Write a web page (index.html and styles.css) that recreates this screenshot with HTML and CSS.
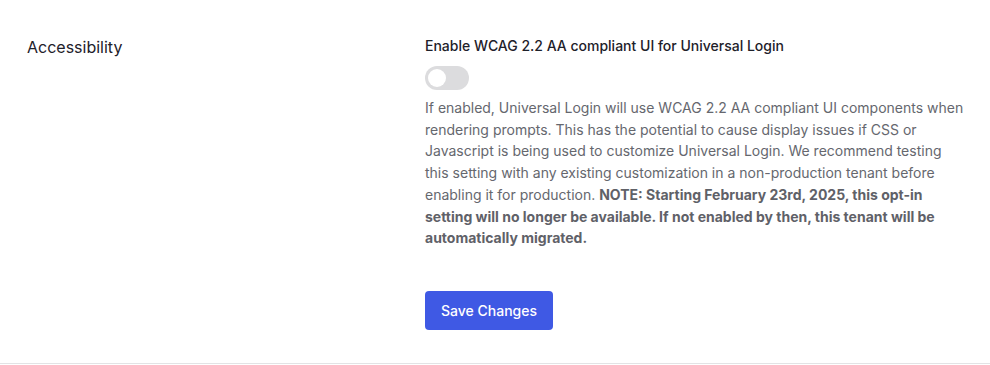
FILE: index.html
```html
<!DOCTYPE html>
<html>
<head>
<meta charset="utf-8">
<link rel="stylesheet" href="styles.css">
</head>
<body>
<section class="row">
  <div class="title">Accessibility</div>
  <div class="content">
    <div class="label">Enable WCAG 2.2 AA compliant UI for Universal Login</div>
    <div class="toggle"><span class="knob"></span></div>
    <p class="desc">If enabled, Universal Login will use WCAG 2.2 AA compliant UI components when rendering prompts. This has the potential to cause display issues if CSS or Javascript is being used to customize Universal Login. We recommend testing this setting with any existing customization in a non-production tenant before enabling it for production. <strong>NOTE: Starting February 23rd, 2025, this opt-in setting will no longer be available. If not enabled by then, this tenant will be automatically migrated.</strong></p>
    <button class="save">Save Changes</button>
  </div>
</section>
</body>
</html>
```
FILE: styles.css
```css
* { box-sizing: border-box; }
html, body { margin: 0; padding: 0; background: #fff; }
body { font-family: Inter, "Noto Sans", sans-serif; color: #1e212a; }
.row {
  display: flex;
  padding: 36px 0 32px 27px;
  border-bottom: 1px solid #e3e3e5;
  height: 364px;
}
.title {
  width: 398px;
  font-size: 16px;
  line-height: 22px;
  font-weight: 400;
  color: #1e212a;
}
.content { width: 540px; }
.label {
  font-size: 14px;
  line-height: 20px;
  font-weight: 500;
  color: #1e212a;
}
.toggle {
  margin-top: 10px;
  width: 44px;
  height: 24px;
  border-radius: 12px;
  background: #dcdcde;
  padding: 3px;
}
.knob {
  display: block;
  width: 18px;
  height: 18px;
  border-radius: 50%;
  background: #fff;
}
.desc {
  margin: 7px 0 0;
  font-size: 14px;
  line-height: 21.7px;
  color: #65676e;
}
.desc strong { font-weight: 700; color: #5f6168; }
.save {
  margin-top: 42px;
  height: 39px;
  padding: 0 16px;
  border: 0;
  border-radius: 4px;
  background: #3f59e4;
  color: #fff;
  font-family: Inter, "Noto Sans", sans-serif;
  font-size: 14px;
  font-weight: 500;
}
```
